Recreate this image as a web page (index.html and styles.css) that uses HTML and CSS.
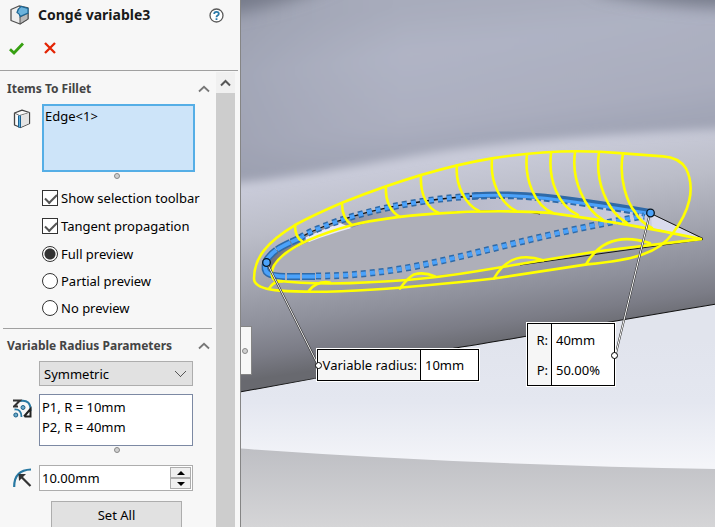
FILE: index.html
```
<!DOCTYPE html>
<html lang="en">
<head>
<meta charset="utf-8">
<title>Congé variable3</title>
<link rel="stylesheet" href="styles.css">
</head>
<body>
<div class="app">
  <aside class="panel">
    <header class="panel-head">
      <div class="title-row">
        <svg width="20" height="20" viewBox="0 0 20 20" aria-hidden="true">
          <path d="M2 4.500 10 1 19 3V14L11 19 2 15.500z" fill="#eee" stroke="#505050" stroke-width="1.300" stroke-linejoin="round"/>
          <path d="M11 12 19 8V14L11 19z" fill="#b9b9b9" stroke="#505050"/>
          <path d="M8 7.500Q9 3.500 12 1.500L19 3.500V8L11 11.500Q11 9 8 7.500z" fill="#6cb3dc" stroke="#1d6796" stroke-width="1.200"/>
        </svg>
        <h1>Congé variable3</h1>
        <button class="icon-btn" aria-label="Help">
          <svg width="15" height="15" viewBox="0 0 15 15"><circle cx="7.500" cy="7.500" r="6.500" fill="#fff" stroke="#5a5a5a" stroke-width="1.300"/><path d="M5.200 6Q5.200 3.800 7.500 3.800T9.800 5.800Q9.800 6.800 8.600 7.500 7.500 8.100 7.500 9.200M7.500 10.200V12" fill="none" stroke="#2a7aa8" stroke-width="1.800"/></svg>
        </button>
      </div>
      <div class="action-row">
        <button class="icon-btn" aria-label="OK"><svg width="15" height="13" viewBox="0 0 15 13"><path d="M1 7.200 5 11 14 1.500" fill="none" stroke="#37a012" stroke-width="2.800"/></svg></button>
        <button class="icon-btn" aria-label="Cancel"><svg width="12" height="12" viewBox="0 0 12 12"><path d="M1 1 11 11M11 1 1 11" fill="none" stroke="#e32404" stroke-width="2.300"/></svg></button>
      </div>
    </header>
    <div class="panel-body">
      <div class="sections">
        <section>
          <h2>Items To Fillet
            <svg width="12" height="8" viewBox="0 0 12 8" aria-hidden="true"><path d="M1 6.500 6 1.800 11 6.500" fill="none" stroke="#777" stroke-width="1.800"/></svg>
          </h2>
          <div class="field edges">
            <svg width="18" height="20" viewBox="0 0 18 20" aria-hidden="true">
              <path d="M1.500 4 9 1.200 16.500 3.500V14.500L7.500 18.500 1.500 16z" fill="#fafafa" stroke="#444" stroke-width="1.300" stroke-linejoin="round"/>
              <path d="M1.500 4 6.500 6.500 16.500 3.500" fill="none" stroke="#777"/>
              <path d="M8 7 16 4V14.500L8 18z" fill="#e4e4e4"/>
              <path d="M6.500 6.500V18.500" stroke="#1a5f8f" stroke-width="3"/><path d="M6.500 7V18" stroke="#5cb1df"/>
            </svg>
            <ul class="listbox" role="listbox" aria-label="Edges"><li role="option">Edge&lt;1&gt;</li></ul>
          </div>
          <span class="grip"></span>
          <div class="options">
            <label><input type="checkbox" checked>Show selection toolbar</label>
            <label><input type="checkbox" checked>Tangent propagation</label>
          </div>
          <div class="options previews">
            <label><input type="radio" name="preview" checked>Full preview</label>
            <label><input type="radio" name="preview">Partial preview</label>
            <label><input type="radio" name="preview">No preview</label>
          </div>
        </section>
        <section class="radius">
          <h2>Variable Radius Parameters
            <svg width="12" height="8" viewBox="0 0 12 8" aria-hidden="true"><path d="M1 6.500 6 1.800 11 6.500" fill="none" stroke="#777" stroke-width="1.800"/></svg>
          </h2>
          <div class="field">
            <span></span>
            <select aria-label="Profile"><option>Symmetric</option></select>
          </div>
          <div class="field points">
            <svg width="20" height="20" viewBox="0 0 20 20" aria-hidden="true">
              <path d="M7 2Q18 0 17.500 12" fill="none" stroke="#2878a2" stroke-width="2"/>
              <path d="M1.500 10.500Q8.500 10 8.500 18" fill="none" stroke="#2878a2" stroke-width="1.800"/>
              <path d="M0 1.500H7L1 7.500H5" fill="none" stroke="#333" stroke-width="2"/>
              <path d="M11 17.500 17.500 10V18.500M11.500 17.500H17" fill="none" stroke="#222" stroke-width="2"/>
              <circle cx="10" cy="8.500" r="2" fill="#6aa9c8" stroke="#1b5f88"/><circle cx="2.800" cy="16" r="2" fill="#6aa9c8" stroke="#1b5f88"/>
            </svg>
            <ul class="listbox" role="listbox" aria-label="Control points"><li role="option">P1, R = 10mm</li><li role="option">P2, R = 40mm</li></ul>
          </div>
          <span class="grip"></span>
          <div class="field value">
            <svg width="20" height="20" viewBox="0 0 20 20" aria-hidden="true">
              <path d="M1.200 19Q1 2 18 1.500" fill="none" stroke="#2878a2" stroke-width="2.200"/>
              <path d="M7 7.500 17.500 18" stroke="#333" stroke-width="2.200"/><path d="M5.500 6H13L6 13z" fill="#333"/>
            </svg>
            <div class="spinner">
              <input type="text" aria-label="Radius" value="10.00mm">
              <div class="steps">
                <button aria-label="Increase"><svg width="8" height="4" viewBox="0 0 8 4"><path d="M0 4 4 0 8 4z"/></svg></button>
                <button aria-label="Decrease"><svg width="8" height="4" viewBox="0 0 8 4"><path d="M0 0 4 4 8 0z"/></svg></button>
              </div>
            </div>
          </div>
          <button class="set-all">Set All</button>
        </section>
      </div>
      <div class="scrollbar">
        <button aria-label="Scroll up"><svg width="11" height="8" viewBox="0 0 11 8"><path d="M1 6.500 5.500 2 10 6.500" fill="none" stroke="#555" stroke-width="2"/></svg></button>
      </div>
    </div>
  </aside>

  <main class="viewport">
    <svg class="scene" viewBox="1 0 474 527" preserveAspectRatio="xMinYMin slice" aria-hidden="true">
      <defs>
        <linearGradient id="sky" x1="0" y1="340" x2="0" y2="465" gradientUnits="userSpaceOnUse"><stop offset="0" stop-color="#e1e4ed"/><stop offset=".5" stop-color="#e4e7f0"/><stop offset="1" stop-color="#f4f5f9"/></linearGradient>
        <linearGradient id="ground" x1="0" y1="445" x2="0" y2="527" gradientUnits="userSpaceOnUse"><stop offset="0" stop-color="#bdbec3"/><stop offset="1" stop-color="#d5d5d7"/></linearGradient>
        <linearGradient id="hull" x1="224" y1="157" x2="250" y2="343" gradientUnits="userSpaceOnUse"><stop offset="0" stop-color="#c9cbd9"/><stop offset=".25" stop-color="#bbbdc8"/><stop offset=".5" stop-color="#a4a6b1"/><stop offset=".72" stop-color="#8e909b"/><stop offset=".88" stop-color="#7b7c86"/><stop offset="1" stop-color="#68696f"/></linearGradient>
        <linearGradient id="upper" x1="220" y1="0" x2="240" y2="150" gradientUnits="userSpaceOnUse"><stop offset="0" stop-color="#a8acbc"/><stop offset=".3" stop-color="#b0b4c5"/><stop offset=".75" stop-color="#acafc0"/><stop offset="1" stop-color="#a1a5b6"/></linearGradient>
        <linearGradient id="side" x1="0" y1="0" x2="475" y2="0" gradientUnits="userSpaceOnUse"><stop offset="0" stop-color="#9599a9" stop-opacity=".5"/><stop offset=".35" stop-color="#9ca0b0" stop-opacity="0"/><stop offset="1" stop-color="#9ca0b0" stop-opacity=".15"/></linearGradient>
        <linearGradient id="cut" x1="22" y1="0" x2="415" y2="0" gradientUnits="userSpaceOnUse"><stop offset="0" stop-color="#666873"/><stop offset=".1" stop-color="#8b8d99"/><stop offset=".24" stop-color="#9295a4"/><stop offset=".4" stop-color="#b4b6c5"/><stop offset="1" stop-color="#cccee0"/></linearGradient>
        <filter id="soft5" x="-20%" y="-20%" width="140%" height="140%"><feGaussianBlur stdDeviation="5"/></filter>
        <filter id="soft8" x="-30%" y="-50%" width="160%" height="200%"><feGaussianBlur stdDeviation="8"/></filter>
      </defs>
      <rect width="475" height="540" fill="url(#sky)"/>
      <path d="M0 448.500Q230 465 475 469V540H0z" fill="url(#ground)"/>
      <g transform="scale(1 1.009)">
        <path d="M0 0H475V301.500C380 317 250 340 215 345L75 375 0 388.500z" fill="url(#hull)"/>
        <path d="M475 301.500C380 317 250 340 215 345L75 375 0 388.500" fill="none" stroke="#111"/>
        <g filter="url(#soft5)"><path d="M-30-30H505V127C350 133 245 142 180 153S60 175-30 184z" fill="url(#upper)"/><path d="M-30-30H505V127C350 133 245 142 180 153S60 175-30 184z" fill="url(#side)"/></g>
        <g filter="url(#soft8)" fill="#777c8b"><path d="M-30-30H120Q60 5-30 18z"/><path d="M330-30H505V8Q430 8 360-8z"/></g>
      </g>

      <path d="M26 263C34 247 58 236 80 228 120 212 180 198 240 194 300 192 360 203 410 213L420 231C360 219 310 213 275 211 230 209 150 215 112 228 60 241 32 258 32 274z" fill="url(#cut)"/>
      <path d="M64 238 80 231 100 223 112 228 70 243z" fill="#e9eaf8"/>
      <path d="M412 228 463 240 358 252 303 260 235 271 163 279 100 283 78 284 36 281 32 274C32 258 60 242 112 228 150 215 230 209 275 211 310 213 360 219 412 228z" fill="#aeafb9"/>
      <path d="M411 214 463 239 412 228z" fill="#dadbed"/>
      <path d="M411 213.500 463 238.500M463 239.500 365 253 280 265M185 214Q275 208 300 214" fill="none" stroke="#151515"/>

      <g fill="none">
        <path d="M60 238C66 234 72 231 80 228 120 211 180 199 240 195.500" stroke="#2f6aa8" stroke-width="7" stroke-dasharray="5 4"/>
        <path d="M60 238C66 234 72 231 80 228 120 211 180 199 240 195.500" stroke="#111" stroke-width="1.300"/>
        <path d="M60 238C66 234 72 231 80 228 120 211 180 199 240 195.500" stroke="#4ba2fa" stroke-width="4" stroke-dasharray="5 4"/>
        <path d="M232 195.500C280 192 320 197 410 212" stroke="#2f6aa8" stroke-width="6"/>
        <path d="M232 198.500C280 195 320 201 405 215" stroke="#2f6aa8" stroke-width="3" stroke-dasharray="6 3"/>
        <path d="M232 196C280 193 320 199 410 213.500" stroke="#4ba2fa" stroke-width="3"/>
        <path d="M26 261C34 248 46 245 62 237" stroke="#2f6aa8" stroke-width="7" stroke-dasharray="15 1"/><path d="M26 261C34 248 46 245 62 237" stroke="#4ba2fa" stroke-width="4" stroke-dasharray="15 1"/>
        <path d="M26 261C22 274 29 276 45 276.500" stroke="#2f6aa8" stroke-width="7"/><path d="M26 261C22 274 29 276 45 276.500" stroke="#4ba2fa" stroke-width="4"/>
        <path d="M47 276.500H75" stroke="#2f6aa8" stroke-width="7" stroke-dasharray="13 2"/><path d="M47 276.500H75" stroke="#4ba2fa" stroke-width="4" stroke-dasharray="13 2"/>
        <path d="M76 276C140 276 190 264 239 252S340 227 404 216" stroke="#2f6aa8" stroke-width="7" stroke-dasharray="5 4"/>
        <path d="M76 276C140 276 190 264 239 252S340 227 404 216" stroke="#4ba2fa" stroke-width="4" stroke-dasharray="5 4"/>
      </g>

      <g transform="scale(1 1.009)" fill="none" stroke="#ff0" stroke-width="2.600" stroke-linecap="round" stroke-linejoin="round">
        <path d="M14 276C14 255 28 239 55 223Q76 212 102 201C145 184 203 165 252 157S340 148 383 152L423 155Q439 156 446 167C456 187 449 210 433 231Q422 246 403 252C390 257 368 260 347 262L254 276C170 285 90 292 40 288Q14 286 14 276z"/>
        <path d="M461 237C410 226 362 218 310 211 230 206 150 214 112 223 65 236 42 250 34 263Q29 273 35 278 60 281 90 281C150 280 205 274 235 269L303 258 358 249 461 237"/>
        <path d="M55 223Q55 235 62 239M102 202Q102 217 112 223M146 185C145 198 150 210 160 215M181 174C180 192 187 207 199 211M217 164C215 182 225 203 239 209M252 158C250 180 260 201 276 209M287 153C284 178 295 204 313 211M311 152C308 178 318 204 338 213M335 151C331 178 345 208 363 218M359 151C355 178 366 209 387 221M383 152C378 177 388 202 395 210Q400 220 412 226"/>
        <path d="M29 286Q34 278 42 279M69 288Q77 278 90 280M160 286Q168 275 174 272 184 269 195 274M254 276C266 254 285 252 303 258M346 262C361 236 385 233 410 241"/>
      </g>
      <g fill="none"><path d="M27 263 78 365M410 213 375.500 355" stroke="#222" stroke-width="2"/><path d="M27 263 78 365M410 213 375.500 355" stroke="#fff"/></g>
      <g fill="#4ba2fa" stroke="#071521" stroke-width="1.300"><circle cx="26.500" cy="262.500" r="3.800"/><circle cx="410.500" cy="213" r="3.800"/></g>
    </svg>

    <div class="splitter"><span class="dot"></span></div>

    <div class="callout first">
      <label for="vr">Variable radius:</label><input id="vr" type="text" value="10mm">
      <span class="pin"></span>
    </div>
    <div class="callout second">
      <label for="r">R:</label><input id="r" type="text" value="40mm">
      <label for="p">P:</label><input id="p" type="text" value="50.00%">
      <span class="pin"></span>
    </div>
  </main>
</div>
</body>
</html>
```
FILE: styles.css
```
* { box-sizing: border-box; }

body {
  margin: 0;
  font: 13px/20px "Noto Sans", "Open Sans", sans-serif;
  color: #000;
}

button, input, select { font: inherit; color: inherit; margin: 0; padding: 0; }
svg { display: block; flex: none; }

.app {
  display: grid;
  grid-template-columns: 240px 1fr;
  height: 100vh;
  overflow: hidden;
}

/* Property panel */
.panel {
  display: flex;
  flex-direction: column;
  min-height: 0;
  background: #f7f7f7;
}

.panel-head {
  height: 71px;
  margin-right: 2px;
  padding: 5px 14px 0 9px;
  border-bottom: 1px solid #a0a0a0;
}

.title-row { display: flex; align-items: center; gap: 9px; height: 20px; }
.title-row h1 { flex: 1; margin: 0; font-size: 14px; line-height: 20px; color: #1a1a1a; }
.icon-btn { border: 0; background: none; }
.action-row { display: flex; align-items: center; gap: 20px; height: 20px; margin-top: 13px; }

.panel-body { flex: 1; display: flex; min-height: 0; padding: 1px 5px 0 0; }
.sections { flex: 1; min-width: 0; overflow: hidden; padding: 0 4px 0 3px; }
section { padding: 7px 0 10px 4px; }
.radius { border-top: 1px solid #a0a0a0; }

h2 {
  display: flex;
  align-items: center;
  justify-content: space-between;
  margin: 0 2px 5px 0;
  font-size: 12px;
  line-height: 20px;
  color: #444;
}

.field { display: grid; grid-template-columns: 20px minmax(0, 1fr); column-gap: 6px; margin: 0 19px 0 6px; }
.field > svg { margin-top: 5px; }
.edges { margin-right: 17px; column-gap: 9px; }

.listbox {
  margin: 0;
  padding: 1px 2px;
  list-style: none;
  border: 1px solid #7c89a3;
  background: #fff;
}
.edges .listbox { height: 68px; padding: 0 1px; border: 2px solid #55aee6; background: #cde4f9; }
.points { margin-top: 8px; }
.points .listbox { height: 52px; padding-top: 2px; }

.grip, .dot {
  display: block;
  width: 6px;
  height: 6px;
  border: 1px solid #888;
  border-radius: 50%;
  background: #d0d0d0;
}
.grip { margin: 1px 0 0 107px; }

.options { display: flex; flex-direction: column; gap: 8px; margin: 9px 0 0 35px; }
.previews { gap: 7px; margin-top: 8px; }
.options label { display: flex; align-items: center; gap: 3px; height: 20px; }

.options input {
  appearance: none;
  width: 16px;
  height: 16px;
  border: 1px solid #333;
  background: #fff;
}
.options input[type="radio"] { border-radius: 50%; }
.options input[type="radio"]:checked { background: radial-gradient(circle, #333 5px, #fff 6px); }
.options input[type="checkbox"]:checked::after {
  content: "";
  display: block;
  width: 10px;
  height: 5px;
  margin: 3px 0 0 2px;
  border: solid #555;
  border-width: 0 0 2px 2px;
  transform: rotate(-45deg);
}

select {
  appearance: none;
  height: 25px;
  padding-left: 4px;
  border: 1px solid #adadad;
  border-radius: 0;
  background:
    linear-gradient(45deg, transparent 46%, #555 46% 58%, transparent 58%) right 11px center / 6px 6px no-repeat,
    linear-gradient(-45deg, transparent 46%, #555 46% 58%, transparent 58%) right 6px center / 6px 6px no-repeat,
    #e1e1e1;
}

.value { margin-top: 12px; }
.value > svg { margin-top: 3px; }
.spinner { display: flex; height: 26px; border: 1px solid #adadad; background: #fff; padding: 1px; }
.spinner input { flex: 1; min-width: 0; border: 0; padding-left: 1px; }
.steps { display: grid; grid-template-rows: 1fr 1fr; width: 21px; }
.steps button, .set-all { border: 1px solid #adadad; background: #e1e1e1; }
.steps button { display: grid; place-items: center; background: #f0f0f0; }
.set-all { display: block; width: 131px; height: 28px; margin: 10px 0 0 44px; }

.scrollbar { width: 19px; background: #cdcdcd; }
.scrollbar button { display: grid; place-items: center; width: 19px; height: 21px; border: 0; background: #f0f0f0; }

/* Graphics area */
.viewport { position: relative; min-width: 0; overflow: hidden; border-left: 1px solid #858585; }
.scene { width: 100%; height: 100%; }

.splitter {
  position: absolute;
  left: -1px;
  top: 326px;
  display: flex;
  align-items: center;
  width: 12px;
  height: 49px;
  padding-left: 2px;
  border: solid #858585;
  border-width: 1px 1px 1px 0;
  background: #f7f7f7;
}

.callout {
  position: absolute;
  display: grid;
  border: 1px solid #000;
  outline: 1px solid #fff;
  background: #f6f6f6;
}
.callout label { padding-right: 3px; text-align: right; align-self: center; }
.callout input {
  width: 100%;
  min-width: 0;
  padding-left: 4px;
  border: 0;
  border-left: 1px solid #000;
  background: #fff;
}
.first { left: 76px; top: 349px; grid-template: 30px / 102px 58px; }
.second { left: 286px; top: 323px; grid-template: 31px 30px / 23px 63px; }

.pin {
  position: absolute;
  width: 7px;
  height: 7px;
  border: 1px solid #000;
  border-radius: 50%;
  background: #fff;
}
.first .pin { left: -3px; top: 12px; }
.second .pin { right: -4px; top: 28px; }
```
